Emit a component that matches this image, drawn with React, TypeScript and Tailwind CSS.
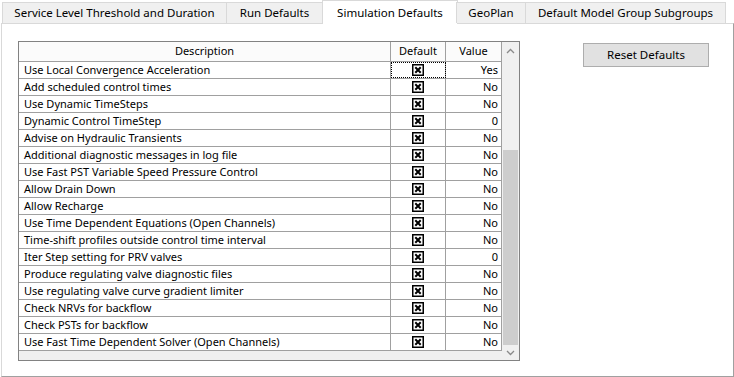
import React from 'react';

const rows: [string, string][] = [
  ['Use Local Convergence Acceleration', 'Yes'],
  ['Add scheduled control times', 'No'],
  ['Use Dynamic TimeSteps', 'No'],
  ['Dynamic Control TimeStep', '0'],
  ['Advise on Hydraulic Transients', 'No'],
  ['Additional diagnostic messages in log file', 'No'],
  ['Use Fast PST Variable Speed Pressure Control', 'No'],
  ['Allow Drain Down', 'No'],
  ['Allow Recharge', 'No'],
  ['Use Time Dependent Equations (Open Channels)', 'No'],
  ['Time-shift profiles outside control time interval', 'No'],
  ['Iter Step setting for PRV valves', '0'],
  ['Produce regulating valve diagnostic files', 'No'],
  ['Use regulating valve curve gradient limiter', 'No'],
  ['Check NRVs for backflow', 'No'],
  ['Check PSTs for backflow', 'No'],
  ['Use Fast Time Dependent Solver (Open Channels)', 'No'],
];

const tabs = [
  { label: 'Service Level Threshold and Duration', w: 'w-[225px]' },
  { label: 'Run Defaults', w: 'w-[97px]' },
  { label: 'Simulation Defaults', w: 'w-[136px]', active: true },
  { label: 'GeoPlan', w: 'w-[70px]' },
  { label: 'Default Model Group Subgroups', w: 'w-[201px]' },
];

function CheckedBox() {
  return (
    <svg width="12" height="12" viewBox="0 0 12 12" className="block">
      <rect x="0.75" y="0.75" width="10.5" height="10.5" fill="#fff" stroke="#000" strokeWidth="1.5" />
      <path d="M3.3 3.3 L8.7 8.7 M8.7 3.3 L3.3 8.7" stroke="#000" strokeWidth="2" />
    </svg>
  );
}

function Chevron({ up }: { up?: boolean }) {
  return (
    <svg width="9" height="6" viewBox="0 0 9 6" className="block">
      <path d={up ? 'M1 5 L4.5 1.5 L8 5' : 'M1 1 L4.5 4.5 L8 1'} fill="none" stroke="#8a8a8a" strokeWidth="1.3" />
    </svg>
  );
}

export default function App() {
  return (
    <div
      className="w-[734px] h-[377px] bg-white text-[11px] text-black overflow-hidden"
      style={{ fontFamily: '"Segoe UI", "Noto Sans", "Open Sans", sans-serif' }}
    >
      {/* Tab strip */}
      <div className="flex items-end h-[23px] pl-[2px] relative z-10 text-[11.5px]">
        {tabs.map(t =>
          t.active ? (
            <div
              key={t.label}
              className={`${t.w} h-[24px] -mb-px bg-white border border-b-0 border-[#d9d9d9] flex items-start justify-center pt-[3px] -mx-px`}
            >
              {t.label}
            </div>
          ) : (
            <div
              key={t.label}
              className={`${t.w} h-[21px] bg-[#f0f0f0] border border-b-0 border-[#d9d9d9] flex items-center justify-center -ml-px first:ml-0`}
            >
              {t.label}
            </div>
          )
        )}
      </div>

      {/* Panel */}
      <div className="ml-px w-[733px] h-[354px] border border-[#d9d9d9] border-r-[#a0a0a0] border-b-[#a0a0a0] flex items-start pl-[16px] pt-[17px]">
        {/* Grid */}
        <div className="w-[502px] h-[320px] border border-[#828282] bg-[#f0f0f0] flex">
          <div className="w-[483px] flex flex-col">
            <div className="flex h-[20px] bg-[#fbfbfb] border-b border-[#a0a0a0]">
              <div className="w-[372px] border-r border-[#a0a0a0] flex items-center justify-center">Description</div>
              <div className="w-[55px] border-r border-[#a0a0a0] flex items-center justify-center">Default</div>
              <div className="w-[56px] border-r border-[#a0a0a0] flex items-center justify-center">Value</div>
            </div>
            {rows.map(([label, value], i) => (
              <div key={label} className="flex h-[17px] bg-white border-b border-[#a0a0a0]">
                <div className="w-[372px] border-r border-[#a0a0a0] pl-[5px] flex items-center whitespace-nowrap">{label}</div>
                <div
                  className={`w-[55px] border-r border-[#a0a0a0] flex items-center justify-center ${
                    i === 0 ? 'outline outline-1 outline-dotted outline-black -outline-offset-1' : ''
                  }`}
                >
                  <CheckedBox />
                </div>
                <div className="w-[56px] border-r border-[#a0a0a0] flex items-center justify-end pr-[3px]">{value}</div>
              </div>
            ))}
          </div>
          {/* Vertical scrollbar */}
          <div className="w-[17px] h-full bg-[#f0f0f0] flex flex-col">
            <div className="h-[17px] flex items-center justify-center">
              <Chevron up />
            </div>
            <div className="h-[91px]" />
            <div className="h-[195px] mx-px bg-[#cdcdcd]" />
            <div className="flex-1 flex items-center justify-center">
              <Chevron />
            </div>
          </div>
        </div>

        <button className="ml-[63px] mt-[2px] w-[126px] h-[24px] bg-[#e1e1e1] border border-[#adadad] flex items-center justify-center text-[11.5px]">
          Reset Defaults
        </button>
      </div>
    </div>
  );
}
